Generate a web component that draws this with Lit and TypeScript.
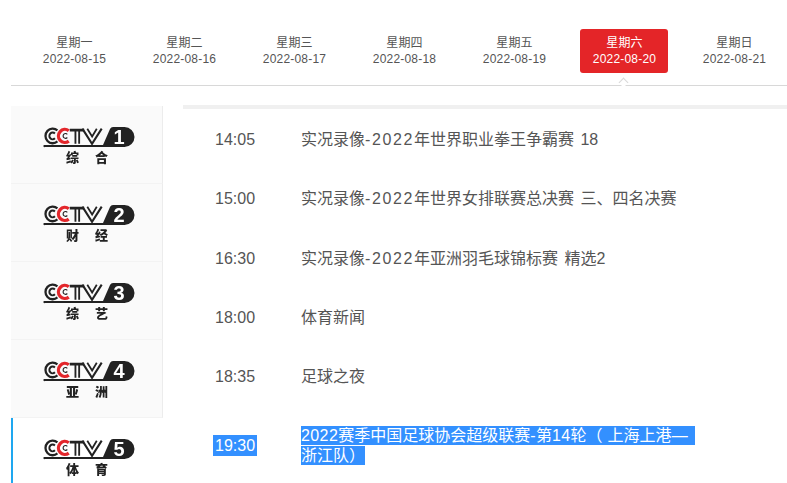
import { LitElement, html, css, svg } from "lit";
import { customElement } from "lit/decorators.js";

const days = [
  ["星期一", "2022-08-15"],
  ["星期二", "2022-08-16"],
  ["星期三", "2022-08-17"],
  ["星期四", "2022-08-18"],
  ["星期五", "2022-08-19"],
  ["星期六", "2022-08-20"],
  ["星期日", "2022-08-21"],
];
const channels = [
  ["1", "综", "合"],
  ["2", "财", "经"],
  ["3", "综", "艺"],
  ["4", "亚", "洲"],
  ["5", "体", "育"],
];
const wide = (t: string) => html`<span class="wide">${t}</span>`;
const rows = [
  ["14:05", html`实况录像${wide("-2022")}年世界职业拳王争霸赛 18`],
  ["15:00", html`实况录像${wide("-2022")}年世界女排联赛总决赛 三、四名决赛`],
  ["16:30", html`实况录像${wide("-2022")}年亚洲羽毛球锦标赛 精选2`],
  ["18:00", html`体育新闻`],
  ["18:35", html`足球之夜`],
];

function logo(n: string, a: string, b: string) {
  return html`<svg class="logo" viewBox="0 0 92 40" width="92" height="40">
    ${svg`
    <g transform="scale(1.03 1.05)">
      <g fill="none" stroke="#222">
        <path d="M14 3.2A7 7 0 1 0 14 13.8" stroke-width="2.2"/>
        <path d="M11.6 6.2A3.2 3.2 0 1 0 11.6 10.8" stroke-width="1.9"/>
      </g>
      <path d="M25 3.6A6.2 6.2 0 1 0 25 13.4" fill="none" stroke="#e3262b" stroke-width="3.2"/>
      <path d="M23.6 7A2.3 2.3 0 1 0 23.6 10" fill="none" stroke="#222" stroke-width="1.1"/>
      <path d="M26 1.6H40V4.2H36V16H34.2V4.2H32.4V16H30.6V4.2H26Z" fill="#222"/>
      <path d="M38.2 1.6L47.6 16L57 1.6" fill="none" stroke="#222" stroke-width="2"/>
      <path d="M43 1.6L47.7 9L52.2 1.6" fill="none" stroke="#222" stroke-width="1.7"/>
    </g>
    <path d="M1 18H60L67 2Q68 0 70 0H81.5A10 10 0 0 1 81.5 20H2A1 1 0 0 1 1 18Z" fill="#222"/>
    <text class="num" x="76" y="17">${n}</text>
    <text class="lab" x="23" y="35">${a}</text>
    <text class="lab" x="52" y="35">${b}</text>
    `}
  </svg>`;
}

@customElement("app-root")
export class AppRoot extends LitElement {
  static styles = css`
    :host {
      display: block;
      width: 787px;
      height: 483px;
      overflow: hidden;
      background: #fff;
      color: #555;
      font-family: "Liberation Sans", "Noto Sans CJK SC", sans-serif;
    }
    .dates {
      display: flex;
      margin-left: 11px;
      padding: 29px 0 0 8px;
      height: 56px;
      border-bottom: 1px solid #d8d8d8;
    }
    .day {
      position: relative;
      box-sizing: border-box;
      width: 110px;
      flex: none;
      display: flex;
      justify-content: center;
    }
    .box {
      box-sizing: border-box;
      width: 88px;
      height: 44px;
      padding: 6px 0 0 1px;
      border-radius: 3px;
      text-align: center;
      font-size: 12px;
      line-height: 16px;
      letter-spacing: 0.2px;
    }
    .on .box {
      background: #e42528;
      color: #fff;
    }
    .on::after {
      content: "";
      position: absolute;
      left: 51px;
      bottom: -1px;
      width: 6px;
      height: 6px;
      background: #fff;
      border-left: 1px solid #d8d8d8;
      border-top: 1px solid #d8d8d8;
      transform: rotate(45deg);
    }
    .content {
      display: flex;
      margin: 19px 0 0 11px;
      align-items: flex-start;
    }
    .side {
      width: 152px;
      flex: none;
      margin-top: 1px;
    }
    .chan {
      box-sizing: border-box;
      height: 78px;
      padding: 21px 0 0 32px;
      background: #fafafa;
      border-right: 1px solid #ececec;
      border-bottom: 1px solid #f3f3f3;
    }
    .chan.cur {
      height: 70px;
      padding-left: 30px;
      background: #fff;
      border: 0;
      border-left: 2px solid #1ea7f0;
    }
    .logo {
      display: block;
      filter: blur(0.35px);
    }
    .num {
      fill: #fff;
      font: bold 20px "Liberation Sans", sans-serif;
      text-anchor: middle;
    }
    .lab {
      fill: #222;
      font: 900 13px "Noto Sans CJK SC", sans-serif;
    }
    .main {
      flex: 1;
      margin-left: 20px;
      padding-top: 1.2px;
      border-top: 4px solid #f0f0f0;
      font-size: 16px;
      line-height: 19.25px;
      word-spacing: 2px;
    }
    .row {
      display: flex;
      align-items: center;
      padding: 20px 0;
    }
    .time {
      width: 86px;
      padding-left: 32px;
      flex: none;
    }
    .title {
      width: 420px;
    }
    .wide {
      letter-spacing: 1.6px;
    }
    .digits {
      letter-spacing: 0.4px;
    }
    .paren {
      letter-spacing: 5px;
    }
    .dash {
      letter-spacing: 7px;
    }
    .sel {
      background: #3390ff;
      color: #fff;
      padding: 1px 0;
      -webkit-box-decoration-break: clone;
      box-decoration-break: clone;
    }
    .time .sel {
      margin-left: -2px;
      padding: 2px 2px;
    }
  `;

  render() {
    return html`
      <div class="dates">
        ${days.map(
          (d, i) => html`<div class="day ${i === 5 ? "on" : ""}">
            <div class="box">${d[0]}<br />${d[1]}</div>
          </div>`
        )}
      </div>
      <div class="content">
        <div class="side">
          ${channels.map(
            (c, i) => html`<div class="chan ${i === 4 ? "cur" : ""}">${logo(c[0], c[1], c[2])}</div>`
          )}
        </div>
        <div class="main">
          ${rows.map(
            (r) => html`<div class="row">
              <div class="time">${r[0]}</div>
              <div class="title">${r[1]}</div>
            </div>`
          )}
          <div class="row">
            <div class="time"><span class="sel">19:30</span></div>
            <div class="title">
              <span class="sel"><span class="digits">2022</span>赛季中国足球协会超级联赛<span class="digits">-</span>第<span class="digits">14</span>轮<span class="paren">（</span>上海上港<span class="dash">—</span><br />浙江队）</span>
            </div>
          </div>
        </div>
      </div>
    `;
  }
}
